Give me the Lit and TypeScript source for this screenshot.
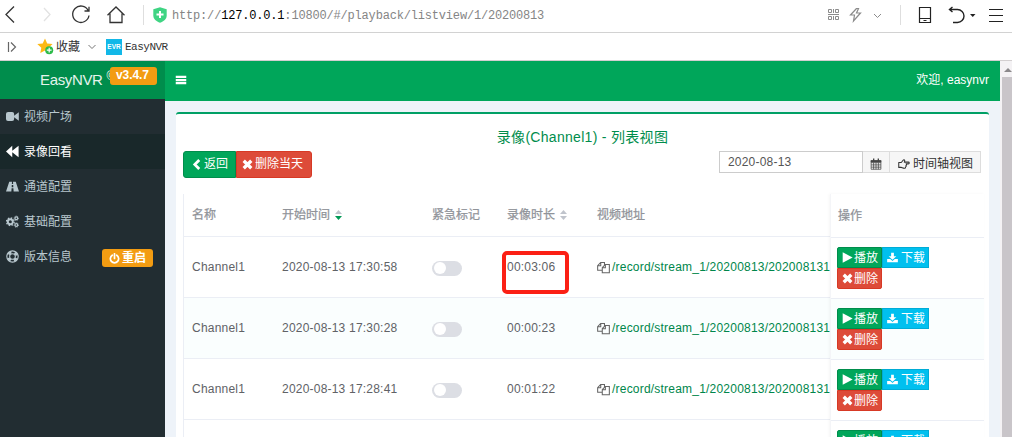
import { LitElement, html, css, svg } from "lit";
import { customElement, property } from "lit/decorators.js";
import { classMap } from "lit/directives/class-map.js";

const GLYPHS: Record<string, unknown> = {
  video: svg`<rect x="0" y="2.500" width="10" height="11" rx="2.500"/><path d="M9.500 7.500 15.800 2.800v10.400L9.500 8.500z"/>`,
  backward: svg`<path d="M0 8 7.700 1V7l7.800-6v14L7.700 9v6z"/>`,
  road: svg`<path d="M4 2h3.400L7.200 5h1.600L8.600 2H12l4 12H9.400L9.100 10H6.900l-.3 4H0zM7.100 6.200 7 8.800h2l-.1-2.600z" fill-rule="evenodd"/>`,
  cogs: svg`<circle cx="5.3" cy="8.3" r="3.1" fill="none" stroke="currentColor" stroke-width="2.4"/><circle cx="5.3" cy="8.3" r="4.7" fill="none" stroke="currentColor" stroke-width="1.7" stroke-dasharray="1.9 1.79"/><circle cx="12.7" cy="4" r="1.7" fill="none" stroke="currentColor" stroke-width="1.4"/><circle cx="12.7" cy="4" r="2.7" fill="none" stroke="currentColor" stroke-width="1" stroke-dasharray="1.2 .92"/><circle cx="12.7" cy="12.3" r="1.7" fill="none" stroke="currentColor" stroke-width="1.4"/><circle cx="12.7" cy="12.3" r="2.7" fill="none" stroke="currentColor" stroke-width="1" stroke-dasharray="1.2 .92"/>`,
  ring: svg`<circle cx="8" cy="8" r="7" fill="none" stroke="currentColor" stroke-width="1.4"/><circle cx="8" cy="8" r="3.5" fill="none" stroke="currentColor" stroke-width="1.3"/><circle cx="8" cy="8" r="5.3" fill="none" stroke="currentColor" stroke-width="3" stroke-dasharray="4.16 4.16" stroke-dashoffset="-2.08"/>`,
  power: svg`<path d="M4.8 3.2a6 6 0 1 0 6.400 0M8 1v7" fill="none" stroke="currentColor" stroke-width="2.500" stroke-linecap="round"/>`,
  left: svg`<path d="M12 1.500 5.500 8l6.500 6.500" fill="none" stroke="currentColor" stroke-width="4"/>`,
  times: svg`<path d="M2.500 2.500l11 11M13.500 2.500l-11 11" fill="none" stroke="currentColor" stroke-width="4.800"/>`,
  play: svg`<path d="M1 .5v15L15.500 8z"/>`,
  download: svg`<path d="M6 1h4v5h3.600L8 11.200 2.400 6H6zM.2 10h4.500L8 13l3.300-3h4.500v5H.2z"/>`,
  hand: svg`<path d="M1 6h3.200c1.600-1 2.200-3.600 3.600-3.800 1.300 0 1.500 1.400.6 3.300h5.400c1.600 0 1.600 2.300 0 2.300h-3.100c1.200.7.8 2-.2 2.100.8.8.4 1.800-.5 2 .2 1-.3 1.700-1.500 1.700-2.100 0-3-.9-4.300-1.100H1z" fill="none" stroke="currentColor" stroke-width="1.400" stroke-linejoin="round"/>`,
  calendar: svg`<path d="M1.500 3.500h13v11.500h-13zM1.500 6.200h13M1.500 9.200h13M1.500 12.200h13M4.800 6v9M8 6v9M11.200 6v9" fill="none" stroke="currentColor" stroke-width="1"/><path d="M1 3h14v2.600H1zM4 .6h1.800v3H4zM10.200.6H12v3h-1.800z"/>`,
  copy: svg`<path d="M6.400 11.500H.8V5.800L4.500 1.800h4.700v3.200M4.600 2v3.900H.9M6.500 8.200l3.700-3.900h5v10.200H6.500zM10.300 4.500v3.800H6.600" fill="none" stroke="currentColor" stroke-width="1.300"/>`,
  bars: svg`<path d="M1 2.200h14v3H1zM1 6.500h14v3H1zM1 10.800h14v3H1z"/>`,
};

@customElement("fa-glyph")
class FaGlyph extends LitElement {
  @property() name = "";
  static styles = css`
    :host { display: inline-flex; width: 12px; height: 12px; flex: none; }
    svg { width: 100%; height: 100%; fill: currentColor; display: block; }
  `;
  render() {
    return html`<svg viewBox="0 0 16 16">${GLYPHS[this.name]}</svg>`;
  }
}

@customElement("browser-chrome")
class BrowserChrome extends LitElement {
  static styles = css`
    :host { display: block; background: #fff; height: 61px; flex: none; color: #333; }
    svg { display: block; flex: none; fill: none; }
    .bar { display: flex; align-items: center; height: 32px; border-bottom: 1px solid #d2d2d2; box-sizing: content-box; }
    .nav { padding-left: 3px; }
    .shield { margin: 0 0 3px 9px; }
    .star { margin-left: 19px; }
    .url { font: 12px/16px "Liberation Mono", monospace; letter-spacing: -0.180px; color: #858585; margin-left: 5px; width: 655px; white-space: pre; }
    .url b { font-weight: 400; color: #000; }
    .marks { display: flex; align-items: center; height: 27px; border-bottom: 1px solid #d3cfd0; padding-left: 6px; }
    .fav { font: 12px/16px "Liberation Sans", "Noto Sans CJK SC", sans-serif; margin-left: 2px; width: 32px; }
    .evr { width: 16px; height: 16px; background: #12b8e8; color: #fff; font: bold 6.500px/16px "Liberation Sans", sans-serif; text-align: center; margin-left: 10px; }
    .site { font: 11px/16px "Liberation Mono", monospace; letter-spacing: -0.500px; margin-left: 3px; }
  `;
  render() {
    return html`
      <div class="bar nav">
        <svg width="141" height="32" viewBox="0 0 141 32" stroke="#333" stroke-width="1.300">
          <path d="M11 6.500 3 14.500l8 8"/>
          <path d="M41 8l6 6.500-6 6.500" stroke="#e2e2e2"/>
          <path d="M85.200 10.500A8.200 8.200 0 1 0 86 15.500M81.500 11h4.500V6.800"/>
          <path d="M104.500 15.200 113 7l8.500 8.200M107 13.500v9h12v-9"/>
          <path d="M140.500 5v20" stroke="#dedede" stroke-width="1"/>
        </svg>
        <svg class="shield" width="14" height="16" viewBox="0 0 14 16">
          <path d="M7 .3 13.700 2.300v6c0 4-3 6-6.700 7.500C3.300 14.300.3 12.300.3 8.300v-6z" fill="#3fd483"/>
          <path d="M7 4v7M3.500 7.500h7" stroke="#fff" stroke-width="2"/>
        </svg>
        <div class="url">http://<b>127.0.0.1</b>:10800/#/playback/listview/1/20200813</div>
        <svg width="185" height="32" viewBox="827 0 185 32" stroke="#8b8b8b">
          <path d="M828.500 9.500h3v3h-3zM835.500 9.500h3v3h-3zM833.500 9v4M828 14.500h11M828.500 16.500h3v3h-3zM835.500 16.500h3v3h-3zM833.500 16v4"/>
          <path d="M856.500 8.500 850.500 15h4l-1 6 7-8h-4l2-4.500z" stroke-width="1.200"/>
          <path d="M874 14l3.500 3.500L881 14"/>
          <path d="M900.500 5v20" stroke="#dedede"/>
          <g stroke="#222" stroke-width="1.400">
            <path d="M919.500 7.500h11v15h-11zM920 18.500h10M923.500 20.500h3" stroke-width="1.200"/>
            <path d="M950 9.500h7.500a6.500 6.500 0 0 1 0 13H953M952.500 7l-3 2.500 3 2.500"/>
            <path d="M970 14h5.500l-2.750 3z" fill="#222" stroke="none"/>
            <path d="M989 9.500h14M989 15.500h14M989 21.500h14" stroke-width="1.200"/>
          </g>
        </svg>
      </div>
      <div class="marks">
        <svg width="12" height="14" viewBox="0 0 12 14" stroke="#666" stroke-width="1.200"><path d="M2.500 2v10M5 2.500 9.500 7 5 11.500"/></svg>
        <svg class="star" width="17" height="17" viewBox="0 0 17 17">
          <path d="M8 .6 10.200 5.400 15.600 6l-4 3.700 1 5.300L8 12.400 3.300 15l1-5.300-4-3.700 5.400-.6z" fill="#fdb913"/>
          <circle cx="12.200" cy="12.200" r="4" fill="#2dbb4a"/><path d="M12.200 9.800v4.800M9.800 12.200h4.800" stroke="#fff" stroke-width="1.200"/>
        </svg>
        <span class="fav">收藏</span>
        <svg width="8" height="6" viewBox="0 0 8 6" stroke="#777"><path d="M.5 1 4 4.500 7.500 1"/></svg>
        <span class="evr">EVR</span>
        <span class="site">EasyNVR</span>
      </div>`;
  }
}

@customElement("nvr-sidebar")
class NvrSidebar extends LitElement {
  static styles = css`
    :host { display: block; width: 165px; flex: none; background: #222d32; color: #b8c7ce; }
    .logo { position: relative; height: 38px; background: #008d4c; color: #e4f4ec; display: flex; box-sizing: border-box; padding: 9px 0 0 40px; font-size: 15px; line-height: 20px; letter-spacing: -0.350px; }
    .mark { font-size: 12px; line-height: 12px; margin-left: 4px; }
    .tag { background: #f39c12; color: #fff; font-weight: 700; font-size: 12px; border-radius: 3px; }
    .ver { position: absolute; left: 110px; top: 6px; width: 47px; height: 18px; line-height: 17px; box-sizing: border-box; padding-left: 6px; letter-spacing: -0.100px; }
    .item { display: flex; align-items: center; height: 35px; padding-left: 6px; }
    .item > fa-glyph { width: 13px; height: 13px; }
    .item span { margin-left: 5px; }
    .active { background: #19282a; color: #fff; }
    .restart { display: flex; align-items: center; justify-content: center; gap: 2px; width: 51px; height: 18px; margin: 3px 0 0 30px; line-height: 18px; }
    .restart fa-glyph { width: 11px; height: 11px; }
  `;
  items = [
    ["video", "视频广场"],
    ["backward", "录像回看"],
    ["road", "通道配置"],
    ["cogs", "基础配置"],
    ["ring", "版本信息"],
  ];
  render() {
    return html`
      <div class="logo">EasyNVR<span class="mark">©</span><div class="tag ver">v3.4.7</div></div>
      ${this.items.map(([icon, label], i) => html`
        <div class=${classMap({ item: true, active: i === 1 })}>
          <fa-glyph name=${icon}></fa-glyph><span>${label}</span>
          ${i === 4 ? html`<div class="tag restart"><fa-glyph name="power"></fa-glyph>重启</div>` : ""}
        </div>`)}`;
  }
}

@customElement("record-table")
class RecordTable extends LitElement {
  static styles = css`
    :host { display: flex; width: 801px; color: #606266; }
    .main { width: 647px; border-left: 1px solid #ebeef5; box-sizing: border-box; overflow: hidden; }
    .ops { flex: 1; border-left: 1px solid #f4f5f8; box-shadow: -1px 0 3px rgba(0, 0, 0, 0.040); }
    .row { display: grid; grid-template-columns: 90px 150px 75px 90px 1fr; height: 61px; box-sizing: border-box; border-bottom: 1px solid #ebeef5; align-items: center; padding-left: 8px; letter-spacing: 0.210px; }
    .head { height: 43px; color: #909399; letter-spacing: 0; -webkit-text-stroke: 0.250px #909399; }
    .alt { background: #fafefe; }
    .cell { position: relative; display: flex; align-items: center; line-height: 16px; white-space: nowrap; }
    .sort { width: 7px; height: 10px; margin-left: 5px; fill: #c0c4cc; }
    .down { fill: #009a55; }
    .switch { width: 30px; height: 15px; box-sizing: border-box; border-radius: 8px; background: #dcdee4; padding: 1.500px; margin-top: 2px; }
    .knob { width: 12px; height: 12px; border-radius: 50%; background: #fff; }
    .path { color: #00864b; margin-left: 2px; }
    .copy { color: #666; width: 13px; height: 13px; }
    .focus { position: absolute; left: -5px; top: -8px; width: 67px; height: 43px; box-sizing: border-box; border: 4px solid #fb2015; border-radius: 5px; }
    .act { height: 61px; box-sizing: border-box; border-bottom: 1px solid #ebeef5; padding: 9px 0 0 6px; }
    .act.head { height: 44px; padding: 14px 0 0 7px; line-height: 16px; }
    .line { display: flex; }
    .btn { display: flex; align-items: center; height: 21px; box-sizing: border-box; color: #fff; line-height: 18px; padding-left: 4px; gap: 1px; border: 1px solid; }
    .play { width: 45px; background: #00a65a; border-color: #008d4c; border-radius: 2px 0 0 0; }
    .down-btn { width: 47px; background: #00c0ef; border-color: #00acd6; gap: 3px; }
    .del { width: 45px; background: #dd4b39; border-color: #d73925; border-radius: 0 0 2px 2px; }
    .btn fa-glyph { width: 11px; height: 11px; }
  `;
  rows = [
    ["2020-08-13 17:30:58", "00:03:06"],
    ["2020-08-13 17:30:28", "00:00:23"],
    ["2020-08-13 17:28:41", "00:01:22"],
  ];
  sort(desc: boolean) {
    return html`<svg class="sort" viewBox="0 0 7 10"><path d="M0 4 3.500 0 7 4z"/><path class=${desc ? "down" : ""} d="M0 6 3.500 10 7 6z"/></svg>`;
  }
  render() {
    return html`
      <div class="main">
        <div class="row head">
          <div class="cell">名称</div>
          <div class="cell">开始时间${this.sort(true)}</div>
          <div class="cell">紧急标记</div>
          <div class="cell">录像时长${this.sort(false)}</div>
          <div class="cell">视频地址</div>
        </div>
        ${this.rows.map(([time, span], i) => html`
          <div class=${classMap({ row: true, alt: i === 1 })}>
            <div class="cell">Channel1</div>
            <div class="cell">${time}</div>
            <div class="cell"><div class="switch"><div class="knob"></div></div></div>
            <div class="cell">${span}${i === 0 ? html`<div class="focus"></div>` : ""}</div>
            <div class="cell"><fa-glyph class="copy" name="copy"></fa-glyph><span class="path">/record/stream_1/20200813/202008131</span></div>
          </div>`)}
      </div>
      <div class="ops">
        <div class="act head">操作</div>
        ${[0, 1, 2, 3].map((i) => html`
          <div class=${classMap({ act: true, alt: i === 1 })}>
            <div class="line">
              <div class="btn play"><fa-glyph name="play"></fa-glyph>播放</div>
              <div class="btn down-btn"><fa-glyph name="download"></fa-glyph>下载</div>
            </div>
            ${i < 3 ? html`<div class="btn del"><fa-glyph name="times"></fa-glyph>删除</div>` : ""}
          </div>`)}
      </div>`;
  }
}

@customElement("app-root")
class AppRoot extends LitElement {
  static styles = css`
    :host { display: flex; flex-direction: column; width: 1012px; height: 437px; overflow: hidden; font: 12px/16px "Liberation Sans", "Noto Sans CJK SC", sans-serif; }
    .body { display: flex; flex: 1; min-height: 0; }
    .page { width: 835px; flex: none; background: #eef3f9; overflow: hidden; }
    .top { display: flex; align-items: center; justify-content: space-between; height: 40px; box-sizing: border-box; background: #00a65a; color: #fff; padding: 0 11px 2px 10px; }
    .card { margin: 11px 11px 0; height: 420px; background: #fff; border-top: 2px solid #00a065; border-radius: 3px 3px 0 0; box-sizing: border-box; padding-left: 7px; }
    .title { text-align: center; color: #008d4c; font-size: 14px; line-height: 20px; padding: 13px 7px 0 0; letter-spacing: 0.300px; }
    .tools { display: flex; align-items: flex-start; justify-content: space-between; padding: 4px 8px 0 0; height: 47px; box-sizing: border-box; }
    .group { display: flex; }
    .btn { display: flex; align-items: center; box-sizing: border-box; height: 27px; color: #fff; border: 1px solid; gap: 2px; line-height: 20px; }
    .btn fa-glyph { width: 11px; height: 11px; margin-top: 1px; }
    .back { width: 53px; background: #00a65a; border-color: #008d4c; border-radius: 3px 0 0 3px; padding: 0 0 2px 7px; }
    .wipe { width: 76px; background: #dd4b39; border-color: #d73925; border-radius: 0 3px 3px 0; padding: 0 0 2px 5px; gap: 2px; }
    .field { width: 144px; height: 22px; border: 1px solid #ccc; box-sizing: border-box; color: #555; line-height: 20px; padding-left: 8px; letter-spacing: 0.200px; }
    .light { height: 22px; background: #f6f6f6; border-color: #ddd; border-left: 0; color: #444; padding-top: 3px; }
    .cal { width: 27px; justify-content: center; }
    .light fa-glyph { width: 12px; height: 12px; margin: 0; }
    .view { width: 91px; padding-left: 8px; gap: 3px; color: #333; }
    .scroll { flex: 1; background: #f4f2f4; }
    .arrow { display: flex; height: 16px; align-items: center; padding: 1px 0 0 4px; box-sizing: border-box; }
    .arrow svg { fill: #8b898b; }
    .thumb { background: #c9c5c9; margin-left: 2px; height: 360px; }
  `;
  render() {
    return html`
      <browser-chrome></browser-chrome>
      <div class="body">
        <nvr-sidebar></nvr-sidebar>
        <div class="page">
          <div class="top"><fa-glyph name="bars"></fa-glyph><span>欢迎, easynvr</span></div>
          <div class="card">
            <div class="title">录像(Channel1) - 列表视图</div>
            <div class="tools">
              <div class="group">
                <div class="btn back"><fa-glyph name="left"></fa-glyph>返回</div>
                <div class="btn wipe"><fa-glyph name="times"></fa-glyph>删除当天</div>
              </div>
              <div class="group">
                <div class="field">2020-08-13</div>
                <div class="btn light cal"><fa-glyph name="calendar"></fa-glyph></div>
                <div class="btn light view"><fa-glyph name="hand"></fa-glyph>时间轴视图</div>
              </div>
            </div>
            <record-table></record-table>
          </div>
        </div>
        <div class="scroll">
          <div class="arrow"><svg width="8" height="4" viewBox="0 0 8 4"><path d="M0 4 4 0l4 4z"/></svg></div>
          <div class="thumb"></div>
        </div>
      </div>`;
  }
}
